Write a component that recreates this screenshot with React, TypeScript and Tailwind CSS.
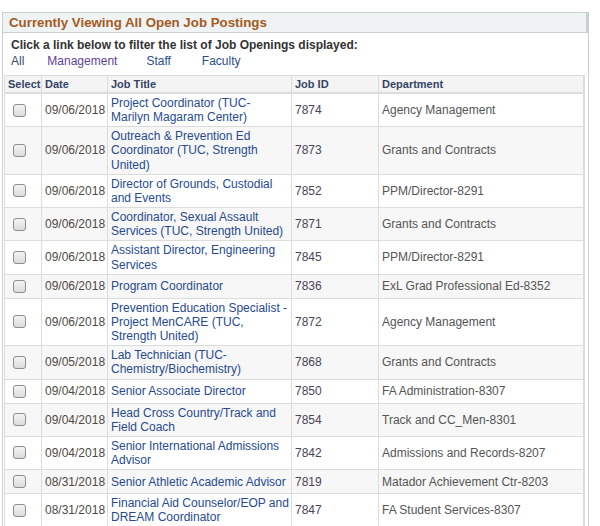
type Job = {
  date: string;
  title: string;
  id: string;
  dept: string;
};

const jobs: Job[] = [
  { date: "09/06/2018", title: "Project Coordinator (TUC-\nMarilyn Magaram Center)", id: "7874", dept: "Agency Management" },
  { date: "09/06/2018", title: "Outreach & Prevention Ed Coordinator (TUC, Strength United)", id: "7873", dept: "Grants and Contracts" },
  { date: "09/06/2018", title: "Director of Grounds, Custodial and Events", id: "7852", dept: "PPM/Director-8291" },
  { date: "09/06/2018", title: "Coordinator, Sexual Assault Services (TUC, Strength United)", id: "7871", dept: "Grants and Contracts" },
  { date: "09/06/2018", title: "Assistant Director, Engineering Services", id: "7845", dept: "PPM/Director-8291" },
  { date: "09/06/2018", title: "Program Coordinator", id: "7836", dept: "ExL Grad Professional Ed-8352" },
  { date: "09/06/2018", title: "Prevention Education Specialist - Project MenCARE (TUC, Strength United)", id: "7872", dept: "Agency Management" },
  { date: "09/05/2018", title: "Lab Technician (TUC-Chemistry/Biochemistry)", id: "7868", dept: "Grants and Contracts" },
  { date: "09/04/2018", title: "Senior Associate Director", id: "7850", dept: "FA Administration-8307" },
  { date: "09/04/2018", title: "Head Cross Country/Track and Field Coach", id: "7854", dept: "Track and CC_Men-8301" },
  { date: "09/04/2018", title: "Senior International Admissions Advisor", id: "7842", dept: "Admissions and Records-8207" },
  { date: "08/31/2018", title: "Senior Athletic Academic Advisor", id: "7819", dept: "Matador Achievement Ctr-8203" },
  { date: "08/31/2018", title: "Financial Aid Counselor/EOP and DREAM Coordinator", id: "7847", dept: "FA Student Services-8307" },
];

function Checkbox() {
  return (
    <span className="my-[3px] block h-[13px] w-[13px] rounded-[3px] border border-[#8e8e8e] bg-gradient-to-b from-[#f4f4f4] to-[#dcdcdc]" />
  );
}

export default function App() {
  return (
    <div className="min-h-[526px] bg-white pt-[12px] pl-[2px] font-['Liberation_Sans',Arial,sans-serif] text-[12px] leading-[14px]">
      <div className="w-[587px] border border-[#c8d0d6]">
        {/* header bar */}
        <div className="h-[20px] border-b border-r-2 border-[#c8d0d6] bg-[#eff3f4] pl-[6px] text-[13.3px] font-bold leading-[20px] text-[#a65a1c]">
          Currently Viewing All Open Job Postings
        </div>

        <div className="pt-[5px]">
          <div className="pl-[8px] font-bold text-[#333]">
            Click a link below to filter the list of Job Openings displayed:
          </div>
          <div className="mt-[2px] flex pl-[8px]">
            <a className="text-[#3c4a6c]" href="#">All</a>
            <a className="ml-[23px] text-[#5f3f95]" href="#">Management</a>
            <a className="ml-[29px] text-[#2c4d8c]" href="#">Staff</a>
            <a className="ml-[31px] text-[#2c4d8c]" href="#">Faculty</a>
          </div>

          <table className="mt-[7px] ml-[1px] w-[581px] table-fixed border-collapse border-t border-l border-r-2 border-b-2 border-[#dcdcdc]">
            <colgroup>
              <col className="w-[37px]" />
              <col className="w-[66px]" />
              <col className="w-[184px]" />
              <col className="w-[87px]" />
              <col />
            </colgroup>
            <thead>
              <tr className="bg-[#f4f4f4] text-left text-[11px] font-bold text-[#344466]">
                <th className="border-r border-b-2 border-[#dcdcdc] px-[3px] py-[1px] font-bold">Select</th>
                <th className="border-r border-b-2 border-[#dcdcdc] px-[3px] py-[1px] font-bold">Date</th>
                <th className="border-r border-b-2 border-[#dcdcdc] px-[3px] py-[1px] font-bold">Job Title</th>
                <th className="border-r border-b-2 border-[#dcdcdc] px-[3px] py-[1px] font-bold">Job ID</th>
                <th className="border-b-2 border-[#dcdcdc] px-[3px] py-[1px] font-bold">Department</th>
              </tr>
            </thead>
            <tbody className="leading-[14.15px]">
              {jobs.map((j, i) => (
                <tr key={j.id} className={i % 2 === 1 ? "bg-[#f7f7f7]" : "bg-white"}>
                  <td className="border-r border-b border-[#dcdcdc] pl-[8px] py-[2px] align-middle">
                    <Checkbox />
                  </td>
                  <td className="border-r border-b border-[#dcdcdc] px-[3px] py-[2px] align-middle text-[#4f4a44]">{j.date}</td>
                  <td className="whitespace-pre-line border-r border-b border-[#dcdcdc] pl-[3px] pr-[1px] py-[2px] align-middle">
                    <a href="#" className="text-[#284a8e]">{j.title}</a>
                  </td>
                  <td className="border-r border-b border-[#dcdcdc] px-[3px] py-[2px] align-middle text-[#4a4458]">{j.id}</td>
                  <td className="border-b border-[#dcdcdc] px-[3px] py-[2px] align-middle text-[#555]">{j.dept}</td>
                </tr>
              ))}
            </tbody>
          </table>
        </div>
      </div>
    </div>
  );
}
